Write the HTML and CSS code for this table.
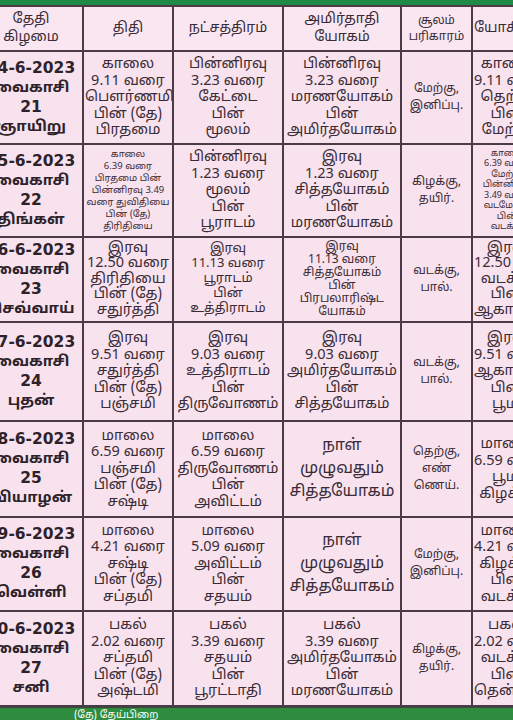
FILE: index.html
```html
<!DOCTYPE html>
<html lang="ta">
<head>
<meta charset="utf-8">
<title>பஞ்சாங்கம்</title>
<link rel="stylesheet" href="styles.css">
</head>
<body>
<div class="page">
  <div class="topbar"></div>
  <table class="cal">
    <colgroup>
      <col class="c-date"><col class="c-tithi"><col class="c-star"><col class="c-yog"><col class="c-sool"><col class="c-last">
    </colgroup>
    <thead>
      <tr class="head">
        <th>தேதி<br>கிழமை</th>
        <th>திதி</th>
        <th>நட்சத்திரம்</th>
        <th>அமிர்தாதி<br>யோகம்</th>
        <th class="small-h">சூலம்<br>பரிகாரம்</th>
        <th>யோகினி</th>
      </tr>
    </thead>
    <tbody>
      <tr class="r1">
        <td class="date"><span class="d">04-6-2023</span><br>வைகாசி<br><span class="d">21</span><br>ஞாயிறு</td>
        <td>காலை<br>9.11 வரை<br>பௌர்ணமி<br>பின் (தே)<br>பிரதமை</td>
        <td>பின்னிரவு<br>3.23 வரை<br>கேட்டை<br>பின்<br>மூலம்</td>
        <td>பின்னிரவு<br>3.23 வரை<br>மரணயோகம்<br>பின்<br>அமிர்தயோகம்</td>
        <td class="sool">மேற்கு,<br>இனிப்பு.</td>
        <td class="last">காலை<br>9.11 வரை<br>தெற்கு<br>பின்<br>மேற்கு</td>
      </tr>
      <tr class="r2">
        <td class="date"><span class="d">05-6-2023</span><br>வைகாசி<br><span class="d">22</span><br>திங்கள்</td>
        <td class="tiny">காலை<br>6.39 வரை<br>பிரதமை பின்<br>பின்னிரவு 3.49<br>வரை துவிதியை<br>பின் (தே)<br>திரிதியை</td>
        <td>பின்னிரவு<br>1.23 வரை<br>மூலம்<br>பின்<br>பூராடம்</td>
        <td>இரவு<br>1.23 வரை<br>சித்தயோகம்<br>பின்<br>மரணயோகம்</td>
        <td class="sool">கிழக்கு,<br>தயிர்.</td>
        <td class="last tiny6">காலை<br>6.39 வரை<br>மேற்கு<br>பின்னிரவு<br>3.49 வரை<br>வடமேற்கு<br>பின்<br>வடக்கு</td>
      </tr>
      <tr class="r3">
        <td class="date"><span class="d">06-6-2023</span><br>வைகாசி<br><span class="d">23</span><br>செவ்வாய்</td>
        <td class="tight">இரவு<br>12.50 வரை<br>திரிதியை<br>பின் (தே)<br>சதுர்த்தி</td>
        <td class="mid">இரவு<br>11.13 வரை<br>பூராடம்<br>பின்<br>உத்திராடம்</td>
        <td class="mid6">இரவு<br>11.13 வரை<br>சித்தயோகம்<br>பின்<br>பிரபலாரிஷ்ட<br>யோகம்</td>
        <td class="sool">வடக்கு,<br>பால்.</td>
        <td class="last tight">இரவு<br>12.50 வரை<br>வடக்கு<br>பின்<br>ஆகாயம்</td>
      </tr>
      <tr class="r4">
        <td class="date"><span class="d">07-6-2023</span><br>வைகாசி<br><span class="d">24</span><br>புதன்</td>
        <td>இரவு<br>9.51 வரை<br>சதுர்த்தி<br>பின் (தே)<br>பஞ்சமி</td>
        <td>இரவு<br>9.03 வரை<br>உத்திராடம்<br>பின்<br>திருவோணம்</td>
        <td>இரவு<br>9.03 வரை<br>அமிர்தயோகம்<br>பின்<br>சித்தயோகம்</td>
        <td class="sool">வடக்கு,<br>பால்.</td>
        <td class="last">இரவு<br>9.51 வரை<br>ஆகாயம்<br>பின்<br>பூமி</td>
      </tr>
      <tr class="r5">
        <td class="date"><span class="d">08-6-2023</span><br>வைகாசி<br><span class="d">25</span><br>வியாழன்</td>
        <td>மாலை<br>6.59 வரை<br>பஞ்சமி<br>பின் (தே)<br>சஷ்டி</td>
        <td>மாலை<br>6.59 வரை<br>திருவோணம்<br>பின்<br>அவிட்டம்</td>
        <td class="big">நாள்<br>முழுவதும்<br>சித்தயோகம்</td>
        <td class="sool">தெற்கு,<br>எண்<br>ணெய்.</td>
        <td class="last">மாலை<br>6.59 வரை<br>பூமி<br>கிழக்கு</td>
      </tr>
      <tr class="r6">
        <td class="date"><span class="d">09-6-2023</span><br>வைகாசி<br><span class="d">26</span><br>வெள்ளி</td>
        <td>மாலை<br>4.21 வரை<br>சஷ்டி<br>பின் (தே)<br>சப்தமி</td>
        <td>மாலை<br>5.09 வரை<br>அவிட்டம்<br>பின்<br>சதயம்</td>
        <td class="big">நாள்<br>முழுவதும்<br>சித்தயோகம்</td>
        <td class="sool">மேற்கு,<br>இனிப்பு.</td>
        <td class="last">மாலை<br>4.21 வரை<br>கிழக்கு<br>பின்<br>வடக்கு</td>
      </tr>
      <tr class="r7">
        <td class="date"><span class="d">10-6-2023</span><br>வைகாசி<br><span class="d">27</span><br>சனி</td>
        <td>பகல்<br>2.02 வரை<br>சப்தமி<br>பின் (தே)<br>அஷ்டமி</td>
        <td>பகல்<br>3.39 வரை<br>சதயம்<br>பின்<br>பூரட்டாதி</td>
        <td>பகல்<br>3.39 வரை<br>அமிர்தயோகம்<br>பின்<br>மரணயோகம்</td>
        <td class="sool">கிழக்கு,<br>தயிர்.</td>
        <td class="last">பகல்<br>2.02 வரை<br>வடக்கு<br>பின்<br>தென்கிழக்கு</td>
      </tr>
    </tbody>
  </table>
  <div class="bottombar"><span class="legend">(தே) தேய்பிறை</span></div>
</div>
</body>
</html>
```
FILE: styles.css
```css
html, body {
  margin: 0;
  padding: 0;
  background: #f7e0ed;
}
.page {
  width: 513px;
  height: 720px;
  overflow: hidden;
  display: flex;
  flex-direction: column;
  background: #f7e0ed;
  font-family: "Noto Sans Tamil", "Lohit Tamil", "Noto Sans", "Liberation Sans", sans-serif;
  color: #3a2c36;
}
.topbar {
  height: 5px;
  flex: none;
  background: #1e8a45;
}
.cal {
  flex: none;
  border-collapse: collapse;
  table-layout: fixed;
  width: 563px;
  margin-left: -22px;
  background: #f8e2ee;
}
.c-date { width: 104px; }
.c-tithi { width: 90px; }
.c-star { width: 110px; }
.c-yog { width: 118px; }
.c-sool { width: 71px; }
.c-last { width: 70px; }
.cal th, .cal td {
  border: 2px solid #4b3b46;
  text-align: center;
  vertical-align: middle;
  padding: 0 1px;
  font-size: 14.5px;
  line-height: 16.5px;
  font-weight: normal;
  white-space: nowrap;
  overflow: hidden;
}
.cal th {
  font-size: 14px;
  line-height: 18px;
  background: #f9e6f1;
}
.cal th.small-h { font-size: 12px; line-height: 16px; }
.head { height: 45px; }
.r1 { height: 93px; }
.r2 { height: 93px; }
.r3 { height: 85px; }
.r4 { height: 99px; }
.r5 { height: 96px; }
.r6 { height: 94px; }
.r7 { height: 95px; }
.cal td.date {
  font-weight: bold;
  font-size: 15px;
  line-height: 19px;
  color: #2d2229;
}
.cal td.date .d {
  font-family: "DejaVu Sans", "Liberation Sans", sans-serif;
  font-size: 15.5px;
}
.cal td.tiny {
  font-size: 9.5px;
  line-height: 12px;
}
.cal td.tiny6 {
  font-size: 9px;
  line-height: 10.5px;
}
.cal td.tight {
  line-height: 15.5px;
}
.cal td.mid {
  font-size: 13px;
  line-height: 15px;
}
.cal td.mid6 {
  font-size: 12px;
  line-height: 13px;
}
.cal td.big {
  font-size: 16px;
  line-height: 23px;
}
.cal td.sool {
  font-size: 12px;
  line-height: 17px;
}
.bottombar {
  flex: 1;
  background: #2e8c3f;
  border-top: 1px solid #3a4a3c;
  display: flex;
  align-items: flex-start;
  padding-left: 74px;
  overflow: hidden;
}
.legend {
  color: #ffffff;
  font-size: 10.5px;
  line-height: 13px;
  padding-top: 1px;
}
```
